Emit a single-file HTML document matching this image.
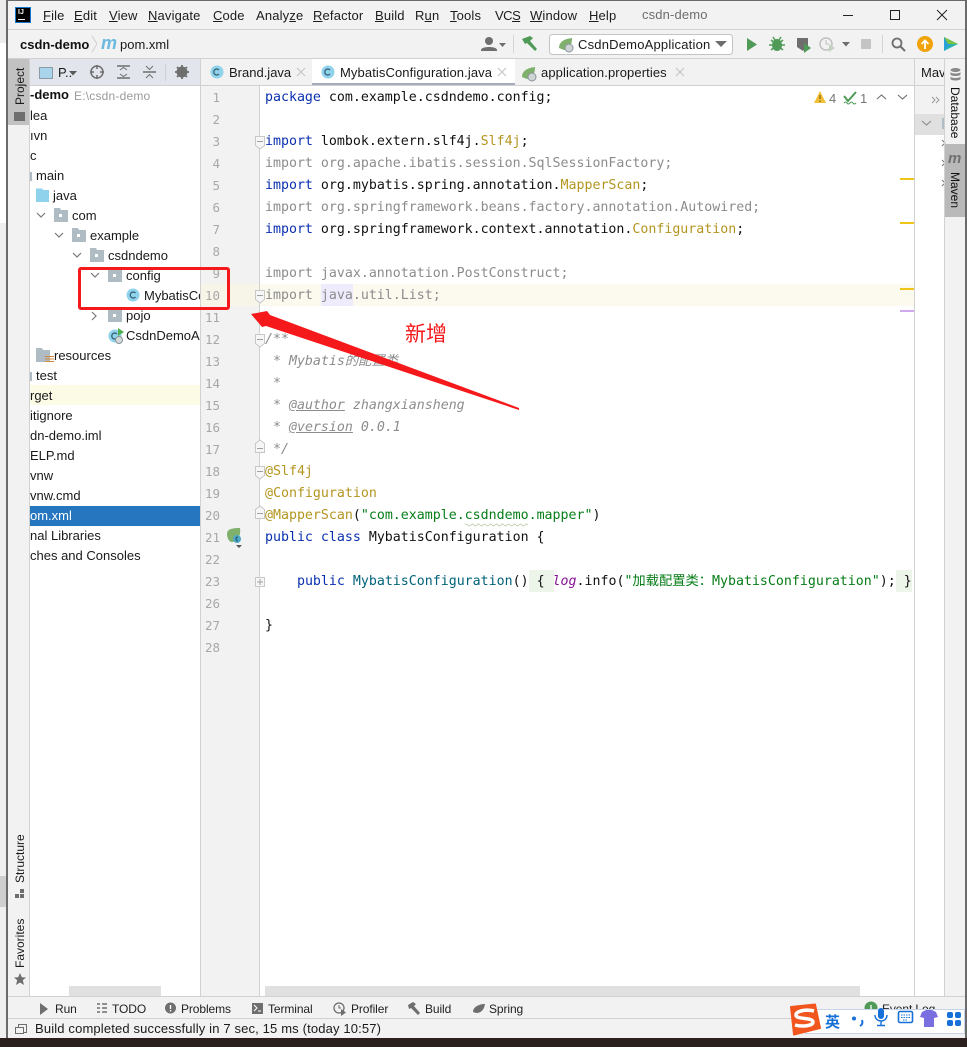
<!DOCTYPE html>
<html lang="zh"><head><meta charset="utf-8"><title>csdn-demo</title>
<style>
html,body{margin:0;padding:0;background:#fff}
#p{position:relative;width:967px;height:1047px;overflow:hidden;background:#f2f2f2;font-family:"Liberation Sans","Noto Sans CJK SC",sans-serif;font-size:13px;color:#1a1a1a}
.a{position:absolute}
.t{position:absolute;white-space:pre;line-height:20px;height:20px}
.m{position:absolute;top:6px;line-height:20px;white-space:pre;font-size:13px;letter-spacing:.15px;color:#1c1c1c}
.n{position:absolute;left:201px;width:19px;text-align:right;font:12.500px/22px "DejaVu Sans Mono",monospace;color:#a8a8a8;margin-top:1px}
.c{position:absolute;left:265px;font:13.280px/22px "DejaVu Sans Mono","Noto Sans CJK SC",monospace;white-space:pre;color:#111;margin-top:1px}
.k{color:#0a30b0}.g{color:#8c8c8c}.y{color:#b3951f}.s{color:#067d17}.i{color:#8c8c8c;font-style:italic}
.v{position:absolute;white-space:pre;font-size:12px;line-height:14px;transform-origin:0 0;transform:rotate(-90deg)}
.w{position:absolute;white-space:pre;font-size:12px;line-height:14px;transform-origin:0 0;transform:rotate(90deg)}
.b{position:absolute;top:1002px;line-height:14px;font-size:12px;letter-spacing:-.1px;white-space:pre;color:#222}
svg{position:absolute;overflow:visible}
</style></head><body><div id="p">

<!-- outside window strip -->
<div class="a" style="left:0;top:0;width:7px;height:43px;background:#ececec"></div>
<div class="a" style="left:0;top:43px;width:7px;height:180px;background:#fff"></div>
<div class="a" style="left:0;top:223px;width:7px;height:824px;background:#efefef"></div>
<div class="a" style="left:0;top:876px;width:7px;height:31px;background:#cfcfcf"></div>
<div class="a" style="left:6px;top:0;width:2px;height:1038px;background:#6a6a6a"></div>
<div class="a" style="left:8px;top:0;width:959px;height:1px;background:#6a6a6a"></div>
<div class="a" style="left:965px;top:0;width:2px;height:1038px;background:#6a6a6a"></div>
<div class="a" style="left:0;top:1038px;width:967px;height:9px;background:#2b201d"></div>

<!-- title bar -->
<div class="a" style="left:8px;top:29px;width:957px;height:1px;background:#d1d1d1"></div>
<div class="a" style="left:15px;top:7px;width:16px;height:16px;background:#000;border:1px solid #1677d2;box-sizing:border-box"></div>
<div class="a" style="left:18px;top:8px;font:bold 7px/9px 'Liberation Sans',sans-serif;color:#fff">IJ</div>
<div class="a" style="left:18px;top:19px;width:7px;height:1px;background:#fff"></div>
<div class="m" style="left:43px"><u>F</u>ile</div>
<div class="m" style="left:74px"><u>E</u>dit</div>
<div class="m" style="left:109px"><u>V</u>iew</div>
<div class="m" style="left:148px"><u>N</u>avigate</div>
<div class="m" style="left:213px"><u>C</u>ode</div>
<div class="m" style="left:256px">Analy<u>z</u>e</div>
<div class="m" style="left:313px"><u>R</u>efactor</div>
<div class="m" style="left:375px"><u>B</u>uild</div>
<div class="m" style="left:415px">R<u>u</u>n</div>
<div class="m" style="left:450px"><u>T</u>ools</div>
<div class="m" style="left:495px;letter-spacing:-.5px">VC<u>S</u></div>
<div class="m" style="left:530px"><u>W</u>indow</div>
<div class="m" style="left:589px"><u>H</u>elp</div>
<div class="m" style="left:642px;top:5px;color:#6e6e6e">csdn-demo</div>
<svg style="left:0;top:0" width="967" height="30"><path d="M843 15.500H853" stroke="#222" stroke-width="1"/><rect x="890.500" y="10.500" width="9" height="9" fill="none" stroke="#222"/><path d="M937 10L947 20M947 10L937 20" stroke="#222"/></svg>

<!-- nav bar -->
<div class="a" style="left:8px;top:58px;width:957px;height:1px;background:#d1d1d1"></div>
<div class="t" style="left:20px;top:35px;font-weight:bold;font-size:13px;color:#111">csdn-demo</div>
<svg style="left:0;top:0" width="967" height="60">
<path d="M92 36L97 44L92 52" fill="none" stroke="#d0d0d0"/>
<text x="101" y="49" font-family="Liberation Sans" font-weight="bold" font-style="italic" font-size="18" fill="#6db9e0">m</text>
<!-- user -->
<circle cx="489" cy="41" r="4" fill="#6e6e6e"/><path d="M481 50C481 46 497 46 497 50V51H481Z" fill="#6e6e6e"/><path d="M499 43H506L502.500 47Z" fill="#6e6e6e"/>
<path d="M513.500 35V53M882.500 35V53" stroke="#d4d4d4"/>
<!-- hammer -->
<path d="M522 39L530 36L533 38L530 41L537 49L535 51L527 43L525 44Z" fill="#4f9a56"/>
<!-- config box -->
<rect x="549.500" y="34.500" width="183" height="20" rx="3" fill="#fff" stroke="#c4c4c4"/>
<path d="M559 48C559 42 564 39 572 38C572 44 570 49 564 50Z" fill="#7fb06c"/><circle cx="569" cy="48" r="4" fill="#cfd4d6" stroke="#8a9498"/>
<path d="M715 41H727L721 47Z" fill="#6e6e6e"/>
<!-- run -->
<path d="M747 38L757 44.500L747 51Z" fill="#4f9a56"/>
<!-- debug -->
<ellipse cx="777" cy="45" rx="5" ry="6" fill="#4f9a56"/><path d="M771 40L783 50M783 40L771 50M769 45H785M773 37L775 40M781 37L779 40" stroke="#4f9a56" stroke-width="1.500"/>
<!-- coverage -->
<path d="M797 38H808V46L803 51L797 47Z" fill="#6e6e6e"/><path d="M804 43L811 48L804 53Z" fill="#4f9a56"/>
<!-- profiler -->
<circle cx="826" cy="44" r="6" fill="none" stroke="#c0c0c0" stroke-width="1.500"/><path d="M826 40V44H829" fill="none" stroke="#c0c0c0"/><path d="M829 44L835 48L829 52Z" fill="#c4d4c4"/>
<path d="M842 42H850L846 46.500Z" fill="#6e6e6e"/>
<rect x="861" y="39" width="10" height="10" fill="#c4c4c4"/>
<!-- search -->
<circle cx="897" cy="43" r="4.500" fill="none" stroke="#6e6e6e" stroke-width="1.800"/><path d="M900.500 46.500L905 51" stroke="#6e6e6e" stroke-width="2"/>
<!-- update -->
<circle cx="925" cy="44" r="8" fill="#f0a30a"/><path d="M925 49V41M921.500 44L925 40.500L928.500 44" fill="none" stroke="#fff" stroke-width="1.800"/>
<!-- toolbox -->
<path d="M944 37L958 44L944 51Z" fill="#2bb3b0"/><path d="M944 37L951 44L944 51Z" fill="#27a2d8"/><path d="M944 37L958 44L948 44Z" fill="#7dc242"/><path d="M952 47L958 44L944 51Z" fill="#1a6fc0"/>
</svg>
<div class="t" style="left:120px;top:35px;font-size:13px">pom.xml</div>
<div class="t" style="left:578px;top:35px;font-size:13px;letter-spacing:.2px">CsdnDemoApplication</div>

<!-- left strip -->
<div class="a" style="left:8px;top:59px;width:22px;height:66px;background:#c2c2c2"></div>
<div class="v" style="left:13px;top:105px">Project</div>
<div class="a" style="left:14px;top:112px;width:11px;height:9px;background:#6e6e6e"></div>
<div class="v" style="left:13px;top:883px">Structure</div>
<svg style="left:0;top:880px" width="30" height="110">
<rect x="15" y="14" width="4" height="4" fill="#6e6e6e"/><rect x="20" y="9" width="4" height="4" fill="#6e6e6e"/><rect x="20" y="14" width="4" height="4" fill="#6e6e6e"/>
<path d="M20 93L21.800 97.200L26 97.500L22.800 100.300L24 105L20 102.500L16 105L17.200 100.300L14 97.500L18.200 97.200Z" fill="#6e6e6e"/>
</svg>
<div class="v" style="left:13px;top:968px">Favorites</div>
<div class="a" style="left:29px;top:59px;width:1px;height:938px;background:#d1d1d1"></div>

<!-- project panel -->
<div class="a" style="left:30px;top:59px;width:170px;height:26px;background:#e2e6ec"></div>
<div class="a" style="left:30px;top:85px;width:170px;height:912px;background:#fff"></div>
<div class="a" style="left:30px;top:85px;width:170px;height:1px;background:#d1d1d1"></div>
<svg style="left:0;top:59px" width="200" height="26">
<rect x="39.500" y="8.500" width="13" height="11" fill="#a8d4ec" stroke="#8a9aa6"/>
<path d="M69 12H77L73 16.500Z" fill="#5a5a5a"/>
<circle cx="97" cy="13" r="6" fill="none" stroke="#6e6e6e" stroke-width="1.500"/><path d="M97 6V10M97 16V20M90 13H94M100 13H104" stroke="#6e6e6e" stroke-width="1.500"/>
<path d="M117 7H130M117 19H130" stroke="#6e6e6e" stroke-width="1.500"/><path d="M120 11L123.500 8.500L127 11M120 15L123.500 17.500L127 15" fill="none" stroke="#6e6e6e"/>
<path d="M143 13H156" stroke="#6e6e6e" stroke-width="1.500"/><path d="M146 7L149.500 10.500L153 7M146 19L149.500 15.500L153 19" fill="none" stroke="#6e6e6e"/>
<path d="M165.500 5V22" stroke="#cdd0d6"/>
<circle cx="182" cy="13" r="4" fill="none" stroke="#6e6e6e" stroke-width="3"/><path d="M182 6V20M175 13H189M177 8L187 18M187 8L177 18" stroke="#6e6e6e" stroke-width="1.800"/>
</svg>
<div class="t" style="left:58px;top:63px;font-size:13px">P..</div>

<!-- tree -->
<div class="t" style="left:30px;top:85px;font-weight:bold;font-size:13px;color:#111">-demo</div>
<div class="t" style="left:74px;top:86px;font-size:12px;color:#9a9a9a;letter-spacing:.2px">E:\csdn-demo</div>
<div class="t" style="left:30px;top:106px">lea</div>
<div class="t" style="left:30px;top:126px">ıvn</div>
<div class="t" style="left:30px;top:146px">c</div>
<div class="a" style="left:30px;top:172px;width:2px;height:9px;background:#b0bcc4"></div>
<div class="t" style="left:36px;top:166px">main</div>
<div class="t" style="left:53px;top:186px">java</div>
<div class="t" style="left:72px;top:206px">com</div>
<div class="t" style="left:90px;top:226px">example</div>
<div class="t" style="left:108px;top:246px">csdndemo</div>
<div class="t" style="left:126px;top:266px">config</div>
<div class="a" style="left:144px;top:286px;width:56px;height:20px;overflow:hidden"><div class="t" style="left:0;top:0">MybatisConfiguration</div></div>
<div class="t" style="left:126px;top:306px">pojo</div>
<div class="a" style="left:126px;top:326px;width:74px;height:20px;overflow:hidden"><div class="t" style="left:0;top:0">CsdnDemoApplication</div></div>
<div class="t" style="left:54px;top:346px">resources</div>
<div class="a" style="left:30px;top:372px;width:2px;height:9px;background:#b0bcc4"></div>
<div class="t" style="left:36px;top:366px">test</div>
<div class="a" style="left:30px;top:385px;width:170px;height:20px;background:#fcfbe6"></div>
<div class="t" style="left:30px;top:386px">rget</div>
<div class="t" style="left:30px;top:406px">itignore</div>
<div class="t" style="left:30px;top:426px">dn-demo.iml</div>
<div class="t" style="left:30px;top:446px">ELP.md</div>
<div class="t" style="left:30px;top:466px">vnw</div>
<div class="t" style="left:30px;top:486px">vnw.cmd</div>
<div class="a" style="left:30px;top:506px;width:170px;height:20px;background:#2675bf"></div>
<div class="t" style="left:30px;top:506px;color:#fff">om.xml</div>
<div class="t" style="left:30px;top:526px">nal Libraries</div>
<div class="t" style="left:30px;top:546px">ches and Consoles</div>
<svg style="left:0;top:180px" width="200" height="190">
<path d="M36 10V8.500H42L43.500 10H49V22H36Z" fill="#8ed2ec"/>
<g fill="none" stroke="#7a7a7a" stroke-width="1.200"><path d="M37 33L41 37L45 33M55 53L59 57L63 53M73 73L77 77L81 73M91 93L95 97L99 93M92 132L96 136L92 140"/></g>
<g fill="#b0bcc4"><path d="M54 30V28H60L61 30H68V42H54Z"/><path d="M72 50V48H78L79 50H86V62H72Z"/><path d="M90 70V68H96L97 70H104V82H90Z"/><path d="M108 90V88H114L115 90H122V102H108Z"/><path d="M108 130V128H114L115 130H122V142H108Z"/><path d="M36 170V168H42L43 170H50V182H36Z"/></g>
<g fill="#fff"><rect x="59" y="34" width="3" height="3"/><rect x="77" y="54" width="3" height="3"/><rect x="95" y="74" width="3" height="3"/><rect x="113" y="94" width="3" height="3"/><rect x="113" y="134" width="3" height="3"/></g>
<path d="M45 179H54M45 176.500H54M45 181.500H54" stroke="#d28a3a"/>
<circle cx="133" cy="115" r="6.500" fill="#8ed2ec"/><path d="M135.500 113A3 3 0 1 0 135.500 117" fill="none" stroke="#33586a" stroke-width="1.200"/>
<circle cx="115" cy="156" r="6.500" fill="#8ed2ec"/><path d="M117 154A3 3 0 1 0 117 158" fill="none" stroke="#33586a" stroke-width="1.200"/><path d="M118 148L124 152L118 156Z" fill="#4fb04f"/><circle cx="119" cy="160" r="3.500" fill="#d5d9db" stroke="#8a9498"/>
</svg>
<div class="a" style="left:69px;top:986px;width:92px;height:11px;background:#e0e0e0"></div>
<div class="a" style="left:200px;top:59px;width:1px;height:938px;background:#d1d1d1"></div>

<!-- tabs -->
<div class="a" style="left:201px;top:59px;width:713px;height:26px;background:#f2f2f2"></div>
<div class="a" style="left:312px;top:59px;width:203px;height:24px;background:#fff"></div>
<div class="a" style="left:312px;top:83px;width:203px;height:3px;background:#a4acbb"></div>
<div class="a" style="left:201px;top:85px;width:714px;height:1px;background:#d1d1d1"></div>
<div class="t" style="left:229px;top:63px">Brand.java</div>
<div class="t" style="left:340px;top:63px;letter-spacing:.1px">MybatisConfiguration.java</div>
<div class="t" style="left:541px;top:63px;letter-spacing:.1px">application.properties</div>
<svg style="left:0;top:59px" width="967" height="27">
<circle cx="217" cy="13" r="6.500" fill="#8ed2ec"/><path d="M219 11A3 3 0 1 0 219 15" fill="none" stroke="#33586a" stroke-width="1.200"/>
<circle cx="328" cy="13" r="6.500" fill="#8ed2ec"/><path d="M330 11A3 3 0 1 0 330 15" fill="none" stroke="#33586a" stroke-width="1.200"/>
<path d="M522 18C522 12 527 9 535 8C535 14 533 19 527 20Z" fill="#7fb06c"/><circle cx="532" cy="18" r="4" fill="#cfd4d6" stroke="#8a9498"/>
<path d="M297 9L305 17M305 9L297 17M498 9L506 17M506 9L498 17M676 9L684 17M684 9L676 17" stroke="#c4c4c4" stroke-width="1.100"/>
</svg>

<!-- gutter + editor -->
<div class="a" style="left:201px;top:86px;width:58px;height:911px;background:#f2f2f2"></div>
<div class="a" style="left:259px;top:86px;width:1px;height:911px;background:#d1d1d1"></div>
<div class="a" style="left:260px;top:86px;width:654px;height:911px;background:#fff"></div>
<div class="a" style="left:201px;top:284px;width:58px;height:22px;background:#f7f5e8"></div>
<div class="a" style="left:260px;top:284px;width:654px;height:22px;background:#fcfaef"></div>
<div class="a" style="left:321px;top:284px;width:32px;height:22px;background:#edebfc"></div>
<div class="a" style="left:529px;top:570px;width:25px;height:22px;background:#edf5ea"></div>
<div class="a" style="left:896px;top:570px;width:16px;height:22px;background:#edf5ea"></div>

<div class="n" style="top:86px">1</div><div class="n" style="top:108px">2</div><div class="n" style="top:130px">3</div><div class="n" style="top:152px">4</div><div class="n" style="top:174px">5</div><div class="n" style="top:196px">6</div><div class="n" style="top:218px">7</div><div class="n" style="top:240px">8</div><div class="n" style="top:262px">9</div><div class="n" style="top:284px">10</div><div class="n" style="top:306px">11</div><div class="n" style="top:328px">12</div><div class="n" style="top:350px">13</div><div class="n" style="top:372px">14</div><div class="n" style="top:394px">15</div><div class="n" style="top:416px">16</div><div class="n" style="top:438px">17</div><div class="n" style="top:460px">18</div><div class="n" style="top:482px">19</div><div class="n" style="top:504px">20</div><div class="n" style="top:526px">21</div><div class="n" style="top:548px">22</div><div class="n" style="top:570px">23</div><div class="n" style="top:592px">26</div><div class="n" style="top:614px">27</div><div class="n" style="top:636px">28</div>

<!-- fold markers -->
<svg style="left:0;top:0" width="967" height="620">
<g fill="#f6f6f6" stroke="#c8c8c8">
<path d="M255.500 136.500H264.500V145.500L260 149L255.500 145.500Z"/>
<path d="M255.500 290.500H264.500V299.500L260 303L255.500 299.500Z"/>
<path d="M255.500 334.500H264.500V343.500L260 347L255.500 343.500Z"/>
<path d="M255.500 452.500H264.500V443.500L260 440L255.500 443.500Z"/>
<path d="M255.500 466.500H264.500V475.500L260 479L255.500 475.500Z"/>
<path d="M255.500 518.500H264.500V509.500L260 506L255.500 509.500Z"/>
<rect x="255.500" y="577.500" width="9" height="9"/>
</g>
<path d="M257 141.500H263M257 295.500H263M257 339.500H263M257 448.500H263M257 471.500H263M257 513.500H263M257 582H263M260 579V585" stroke="#a0a0a0"/>
</svg>

<div class="c" style="top:86px"><span class="k">package</span> com.example.csdndemo.config;</div>
<div class="c" style="top:130px"><span class="k">import</span> lombok.extern.slf4j.<span class="y">Slf4j</span>;</div>
<div class="c g" style="top:152px">import org.apache.ibatis.session.SqlSessionFactory;</div>
<div class="c" style="top:174px"><span class="k">import</span> org.mybatis.spring.annotation.<span class="y">MapperScan</span>;</div>
<div class="c g" style="top:196px">import org.springframework.beans.factory.annotation.Autowired;</div>
<div class="c" style="top:218px"><span class="k">import</span> org.springframework.context.annotation.<span class="y">Configuration</span>;</div>
<div class="c g" style="top:262px">import javax.annotation.PostConstruct;</div>
<div class="c g" style="top:284px">import java.util.List;</div>
<div class="c i" style="top:328px">/**</div>
<div class="c i" style="top:350px"> * Mybatis的配置类</div>
<div class="c i" style="top:372px"> *</div>
<div class="c i" style="top:394px"> * <u>@author</u> zhangxiansheng</div>
<div class="c i" style="top:416px"> * <u>@version</u> 0.0.1</div>
<div class="c i" style="top:438px"> */</div>
<div class="c y" style="top:460px">@Slf4j</div>
<div class="c y" style="top:482px">@Configuration</div>
<div class="c" style="top:504px"><span class="y">@MapperScan</span>(<span class="s">"com.example.csdndemo.mapper"</span>)</div>
<div class="c" style="top:526px"><span class="k">public class</span> MybatisConfiguration {</div>
<div class="c" style="top:570px">    <span class="k">public</span> <span style="color:#00627a">MybatisConfiguration</span>() { <span style="color:#871094;font-style:italic">log</span>.info(<span class="s">"加载配置类：MybatisConfiguration"</span>); }</div>
<div class="c" style="top:614px">}</div>
<svg style="left:0;top:86px" width="967" height="500">
<path d="M465 439q1.500 -2 3 0t3 0t3 0t3 0t3 0t3 0t3 0t3 0t3 0t3 0t3 0t3 0t3 0t3 0t3 0t3 0t3 0t3 0t3 0t3 0t3 0" fill="none" stroke="#b8c8a8" stroke-width=".8"/>
<path d="M227 448C227 443 232 442 240 442C241 449 238 456 232 456C229 456 227 452 227 448Z" fill="#7fb06c"/><circle cx="237" cy="453" r="4" fill="#4ea9c9"/><path d="M238 451A2 2 0 1 0 238 455" fill="none" stroke="#1f4a5a"/><path d="M236 459H242L239 462Z" fill="#555"/>
<!-- inspections widget -->
<path d="M820 5L826 17H814Z" fill="#f2c037"/><path d="M820 9V13M820 14.500V16" stroke="#6a4a00"/>
<path d="M844 10L848 15L856 6" fill="none" stroke="#4f9a56" stroke-width="2"/><path d="M844 17q2 -2 3 0t3 0t3 0t3 0" fill="none" stroke="#4f9a56" stroke-width="1.100"/>
<path d="M877 13L881.500 9L886 13M898 9L902.500 13L907 9" fill="none" stroke="#6e6e6e" stroke-width="1.100"/>
</svg>
<div class="t" style="left:829px;top:89px;font-size:13px;color:#777">4</div>
<div class="t" style="left:860px;top:89px;font-size:13px;color:#777">1</div>
<!-- error stripe -->
<div class="a" style="left:900px;top:178px;width:14px;height:2px;background:#eec518"></div>
<div class="a" style="left:900px;top:222px;width:14px;height:2px;background:#eec518"></div>
<div class="a" style="left:900px;top:288px;width:14px;height:2px;background:#eec518"></div>
<div class="a" style="left:900px;top:310px;width:14px;height:2px;background:#cfa9ee"></div>
<div class="a" style="left:265px;top:986px;width:595px;height:11px;background:#e0e0e0"></div>
<div class="a" style="left:914px;top:59px;width:1px;height:938px;background:#d1d1d1"></div>

<!-- maven panel -->
<div class="a" style="left:915px;top:59px;width:30px;height:26px;background:#f2f2f2;overflow:hidden"><div class="t" style="left:6px;top:4px">Maven</div></div>
<div class="a" style="left:915px;top:86px;width:30px;height:28px;background:#f2f2f2"></div>
<div class="a" style="left:915px;top:114px;width:30px;height:21px;background:#e0e0e0"></div>
<div class="a" style="left:915px;top:135px;width:30px;height:862px;background:#fff"></div>
<div class="a" style="left:915px;top:85px;width:30px;height:1px;background:#d1d1d1"></div>
<svg style="left:0;top:90px" width="967" height="110">
<path d="M932 7L935 10L932 13M936 7L939 10L936 13" fill="none" stroke="#9a9a9a"/>
<path d="M922 31L926.500 35L931 31" fill="none" stroke="#8a8a8a" stroke-width="1.100"/>
<rect x="942" y="28" width="3" height="11" fill="#b0bcc4"/>
<path d="M942 50L945 53L942 56M942 70L945 73L942 76M942 90L945 93L942 96" fill="none" stroke="#777"/>
</svg>
<div class="a" style="left:944px;top:59px;width:1px;height:938px;background:#d1d1d1"></div>

<!-- right strip -->
<svg style="left:0;top:65px" width="967" height="30"><g fill="#8a8a8a"><ellipse cx="955.500" cy="5" rx="5" ry="2"/><path d="M950.500 7C951 9 960 9 960.500 7V9.500C960 11.500 951 11.500 950.500 9.500Z"/><path d="M950.500 11.500C951 13.500 960 13.500 960.500 11.500V14C960 16 951 16 950.500 14Z"/></g></svg>
<div class="w" style="left:962px;top:87px;color:#111">Database</div>
<div class="a" style="left:945px;top:144px;width:20px;height:73px;background:#b9b9b9"></div>
<div class="a" style="left:948px;top:150px;font:italic bold 15px/18px 'Liberation Sans',sans-serif;color:#707070">m</div>
<div class="w" style="left:962px;top:172px;color:#111">Maven</div>

<!-- bottom tool bar -->
<div class="a" style="left:8px;top:996px;width:957px;height:1px;background:#d1d1d1"></div>
<div class="a" style="left:8px;top:1018px;width:957px;height:1px;background:#d1d1d1"></div>
<div class="b" style="left:55px">Run</div>
<div class="b" style="left:112px">TODO</div>
<div class="b" style="left:181px">Problems</div>
<div class="b" style="left:268px">Terminal</div>
<div class="b" style="left:351px">Profiler</div>
<div class="b" style="left:425px">Build</div>
<div class="b" style="left:489px">Spring</div>
<div class="b" style="left:882px">Event Log</div>
<svg style="left:0;top:997px" width="967" height="40">
<path d="M40 6L48 12L40 18Z" fill="#6e6e6e"/>
<path d="M97 7H100M97 11H100M97 15H100M102 7H107M102 11H107M102 15H107" stroke="#6e6e6e" stroke-width="1.500"/>
<circle cx="170.500" cy="11" r="5.500" fill="#6e6e6e"/><path d="M170.500 8V12M170.500 13V14.500" stroke="#fff" stroke-width="1.400"/>
<rect x="252" y="6" width="11" height="11" fill="#6e6e6e"/><path d="M254 8L257 11L254 14M258 14H261" fill="none" stroke="#fff"/>
<circle cx="339" cy="11" r="5" fill="none" stroke="#6e6e6e" stroke-width="1.300"/><path d="M339 8V11H341" fill="none" stroke="#6e6e6e"/><path d="M341 12L346 15.500L341 19Z" fill="#6e6e6e"/>
<path d="M408 8L413 5L416 7L414 9L420 16L418 18L411 11L409 12Z" fill="#6e6e6e"/>
<path d="M473 15C473 10 479 7 485 7C484 13 481 16 476 16Z" fill="#6e6e6e"/>
<circle cx="871" cy="11" r="6.500" fill="#4f9a56"/><path d="M871 8V14" stroke="#fff" stroke-width="1.300"/>
<rect x="18.500" y="27.500" width="8" height="8" fill="none" stroke="#6e6e6e"/><rect x="15.500" y="30.500" width="8" height="6" fill="#f2f2f2" stroke="#6e6e6e"/>
</svg>
<div class="t" style="left:35px;top:1019px;font-size:13px;letter-spacing:.15px">Build completed successfully in 7 sec, 15 ms (today 10:57)</div>

<!-- IME bar -->
<div class="a" style="left:805px;top:1009px;width:160px;height:25px;background:#fff;border:1px solid #c8d4ea;box-sizing:border-box"></div>
<svg style="left:0;top:1000px" width="967" height="47">
<path d="M791 7L815 4.500L820 28L794 34.500Z" fill="#f0561d" stroke="#f0561d" stroke-width="2" stroke-linejoin="round"/>
<path d="M814 11C806 9 796 11 796 15C796 20 813 17 813 22C813 26 802 27 795 25" fill="none" stroke="#fff" stroke-width="3.500"/>
<circle cx="854" cy="18.500" r="2" fill="#1670d8"/><path d="M862 20C863 23 862 25 860 26" fill="none" stroke="#1670d8" stroke-width="2"/>
<rect x="878" y="8" width="6" height="11" rx="3" fill="#1670d8"/><path d="M875 15C875 23 887 23 887 15M881 21V25M877 25.500H885" fill="none" stroke="#1670d8" stroke-width="1.400"/>
<rect x="898.500" y="11.500" width="14" height="11" rx="1.500" fill="none" stroke="#1670d8" stroke-width="1.600"/><path d="M901 15H910M901 17.500H910M903 20H908" stroke="#1670d8" stroke-dasharray="1.500 1"/>
<path d="M922 12L926 10H932L936 12L938 17L934 18V27H924V18L920 17Z" fill="#7a6fe0"/>
<rect x="947" y="12" width="6" height="6" rx="2" fill="#1670d8"/><rect x="955" y="12" width="6" height="6" rx="2" fill="#1670d8"/><rect x="947" y="20" width="6" height="6" rx="2" fill="#1670d8"/><rect x="955" y="20" width="6" height="6" rx="2" fill="#1670d8"/>
</svg>
<div class="a" style="left:825px;top:1012px;font:bold 15px/20px 'Noto Sans CJK SC',sans-serif;color:#1670d8">英</div>

<!-- annotations -->
<div class="a" style="left:78px;top:267px;width:152px;height:43px;border:3px solid #f5191b;border-radius:3px;box-sizing:border-box"></div>
<svg style="left:0;top:0" width="967" height="500"><path d="M251 314L267 311L270 315L519 408L519 410L266 326L262 327Z" fill="#f5191b"/></svg>
<div class="a" style="left:405px;top:319px;font:21px/28px 'Noto Sans CJK SC',sans-serif;color:#f5191b">新增</div>
</div></body></html>
